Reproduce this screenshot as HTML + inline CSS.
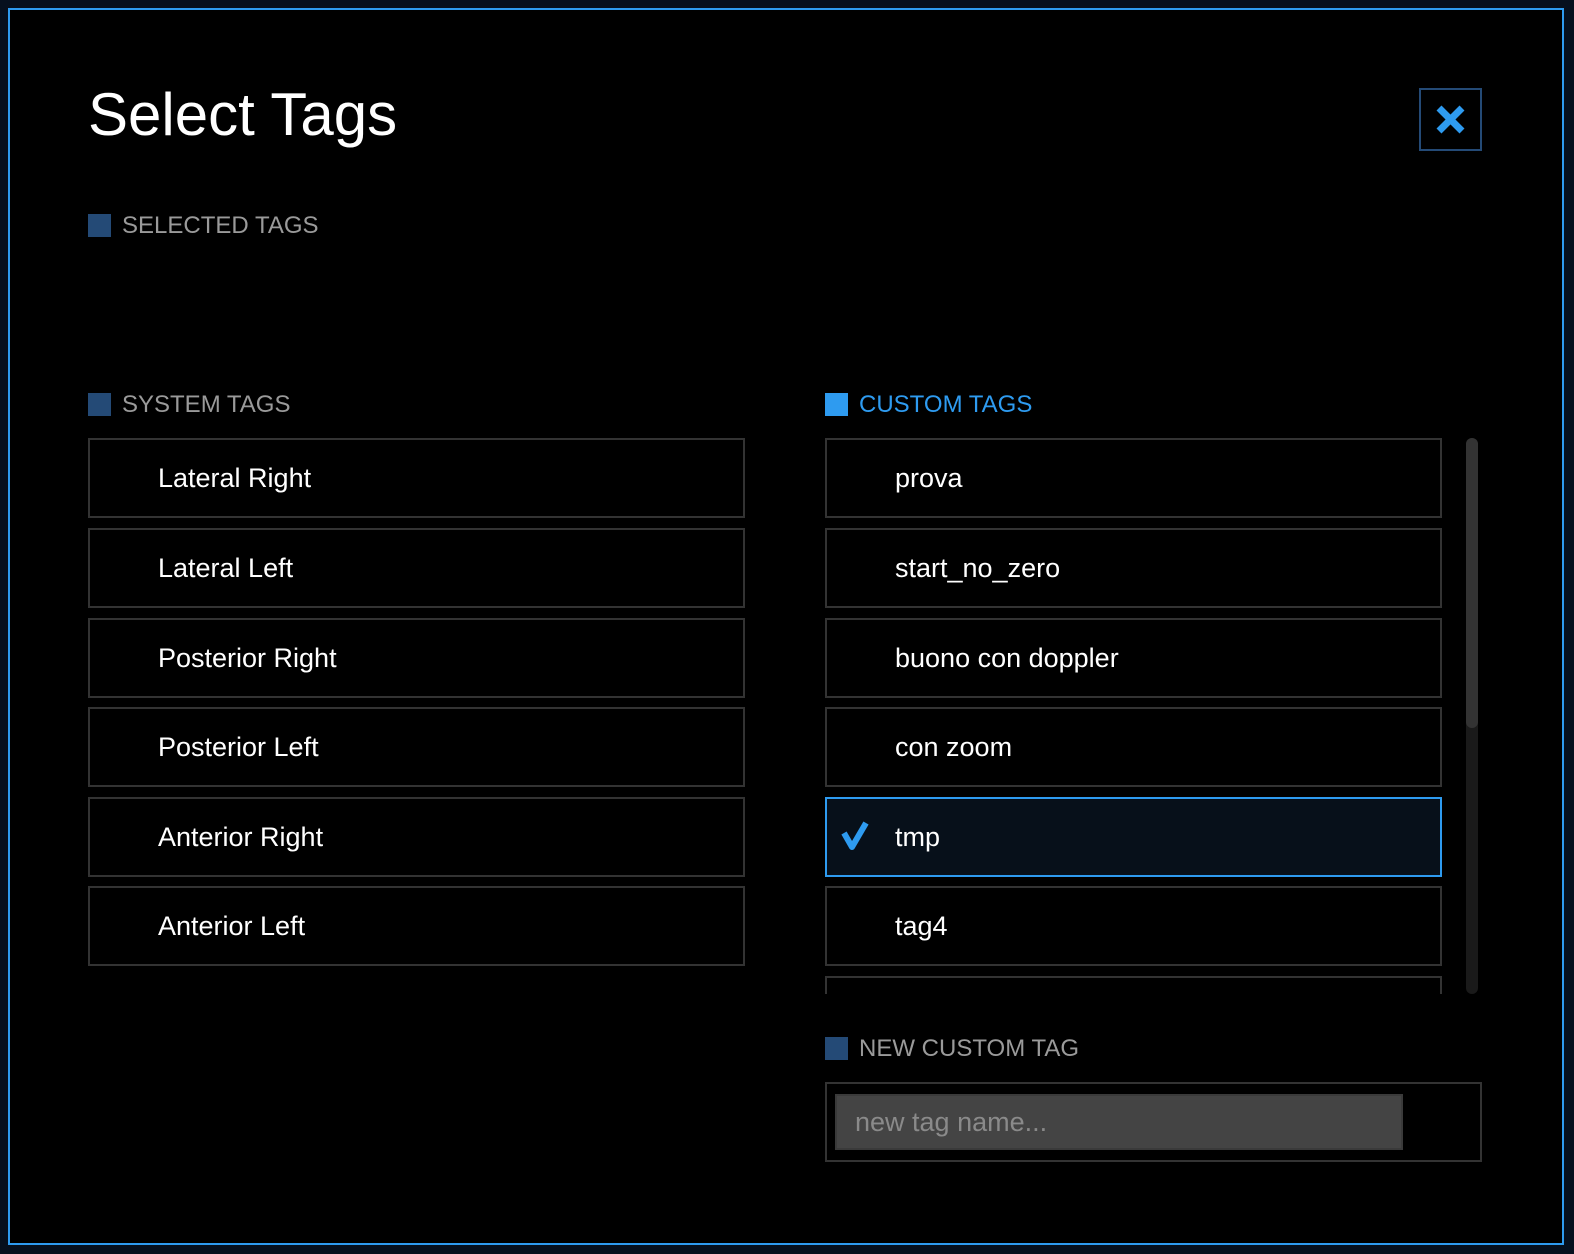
<!DOCTYPE html>
<html><head><style>
body{margin:0;width:1574px;height:1254px;background:#06101e;position:relative;overflow:hidden;font-family:"Liberation Sans",sans-serif}
.frame{position:absolute;left:8px;top:8px;width:1552px;height:1233px;border:2px solid #2e9bf0;background:#000}
.a{position:absolute}
h1{position:absolute;left:88px;top:80px;margin:0;font-weight:normal;font-size:60px;color:#fff;letter-spacing:0}
.lab{position:absolute;font-size:24px;color:#9a9a9a;line-height:24px}
.lab i{position:absolute;left:-34px;top:0;width:23px;height:23px;background:#244a76}
.row{position:absolute;border:2px solid #333;color:#fff;font-size:27px;line-height:76px;padding-left:68px;box-sizing:border-box;height:80px}
.sel{border-color:#2e9bf0;background:#07101a}
</style></head><body>
<div class="frame"></div>
<h1>Select Tags</h1>
<div class="a" style="left:1419px;top:88px;width:63px;height:63px;border:2px solid #244a76;box-sizing:border-box">
<svg width="63" height="63" style="position:absolute;left:-2px;top:-2px"><path d="M20 20L43 43M43 20L20 43" stroke="#2e9bf0" stroke-width="7"/></svg></div>
<div class="lab" style="left:122px;top:214px"><i></i>SELECTED TAGS</div>
<div class="lab" style="left:122px;top:393px"><i></i>SYSTEM TAGS</div>
<div class="lab" style="left:859px;top:393px;color:#2e9bf0"><i style="background:#2e9bf0"></i>CUSTOM TAGS</div>
<div class="row" style="left:88px;top:438px;width:657px">Lateral Right</div>
<div class="row" style="left:88px;top:528px;width:657px">Lateral Left</div>
<div class="row" style="left:88px;top:618px;width:657px">Posterior Right</div>
<div class="row" style="left:88px;top:707px;width:657px">Posterior Left</div>
<div class="row" style="left:88px;top:797px;width:657px">Anterior Right</div>
<div class="row" style="left:88px;top:886px;width:657px">Anterior Left</div>
<div class="a" style="left:825px;top:438px;width:620px;height:556px;overflow:hidden">
<div class="row" style="left:0;top:0;width:617px">prova</div>
<div class="row" style="left:0;top:90px;width:617px">start_no_zero</div>
<div class="row" style="left:0;top:180px;width:617px">buono con doppler</div>
<div class="row" style="left:0;top:269px;width:617px">con zoom</div>
<div class="row sel" style="left:0;top:359px;width:617px">tmp
<svg width="40" height="40" style="position:absolute;left:10px;top:18px"><path d="M7 16L15 30L29 6" stroke="#2e9bf0" stroke-width="6" fill="none" stroke-linejoin="round"/></svg></div>
<div class="row" style="left:0;top:448px;width:617px">tag4</div>
<div class="row" style="left:0;top:538px;width:617px"></div>
</div>
<div class="a" style="left:1466px;top:438px;width:12px;height:556px;background:#1a1a1a;border-radius:6px"><div style="width:12px;height:290px;background:#333;border-radius:6px"></div></div>
<div class="lab" style="left:859px;top:1037px"><i></i>NEW CUSTOM TAG</div>
<div class="a" style="left:825px;top:1082px;width:657px;height:80px;border:2px solid #333;box-sizing:border-box">
<div class="a" style="left:8px;top:10px;width:568px;height:56px;background:#444;border:2px solid #3a3a3a;box-sizing:border-box;color:#8a8a8a;font-size:27px;line-height:52px;padding-left:18px">new tag name...</div></div>
</body></html>
